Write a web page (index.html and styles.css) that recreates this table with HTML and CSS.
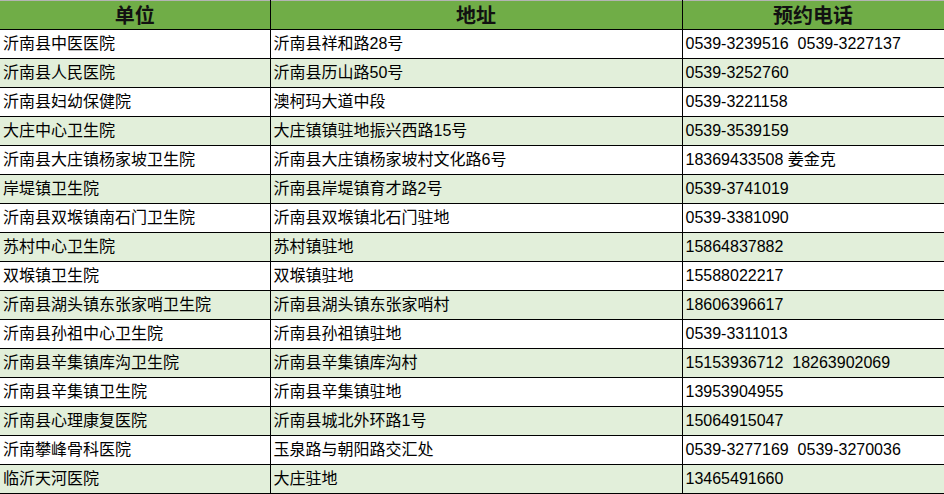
FILE: index.html
```html
<!DOCTYPE html>
<html lang="zh-CN">
<head>
<meta charset="utf-8">
<title>预约电话</title>
<link rel="stylesheet" href="styles.css">
</head>
<body>
<table class="grid">
  <colgroup>
    <col class="c1"><col class="c2"><col class="c3">
  </colgroup>
  <thead>
    <tr><th>单位</th><th>地址</th><th>预约电话</th></tr>
  </thead>
  <tbody>
    <tr><td>沂南县中医医院</td><td>沂南县祥和路28号</td><td>0539-3239516&nbsp;&nbsp;0539-3227137</td></tr>
    <tr><td>沂南县人民医院</td><td>沂南县历山路50号</td><td>0539-3252760</td></tr>
    <tr><td>沂南县妇幼保健院</td><td>澳柯玛大道中段</td><td>0539-3221158</td></tr>
    <tr><td>大庄中心卫生院</td><td>大庄镇镇驻地振兴西路15号</td><td>0539-3539159</td></tr>
    <tr><td>沂南县大庄镇杨家坡卫生院</td><td>沂南县大庄镇杨家坡村文化路6号</td><td>18369433508 姜金克</td></tr>
    <tr><td>岸堤镇卫生院</td><td>沂南县岸堤镇育才路2号</td><td>0539-3741019</td></tr>
    <tr><td>沂南县双堠镇南石门卫生院</td><td>沂南县双堠镇北石门驻地</td><td>0539-3381090</td></tr>
    <tr><td>苏村中心卫生院</td><td>苏村镇驻地</td><td>15864837882</td></tr>
    <tr><td>双堠镇卫生院</td><td>双堠镇驻地</td><td>15588022217</td></tr>
    <tr><td>沂南县湖头镇东张家哨卫生院</td><td>沂南县湖头镇东张家哨村</td><td>18606396617</td></tr>
    <tr><td>沂南县孙祖中心卫生院</td><td>沂南县孙祖镇驻地</td><td>0539-3311013</td></tr>
    <tr><td>沂南县辛集镇库沟卫生院</td><td>沂南县辛集镇库沟村</td><td>15153936712&nbsp;&nbsp;18263902069</td></tr>
    <tr><td>沂南县辛集镇卫生院</td><td>沂南县辛集镇驻地</td><td>13953904955</td></tr>
    <tr><td>沂南县心理康复医院</td><td>沂南县城北外环路1号</td><td>15064915047</td></tr>
    <tr><td>沂南攀峰骨科医院</td><td>玉泉路与朝阳路交汇处</td><td>0539-3277169&nbsp;&nbsp;0539-3270036</td></tr>
    <tr><td>临沂天河医院</td><td>大庄驻地</td><td>13465491660</td></tr>
  </tbody>
</table>
</body>
</html>
```

FILE: styles.css
```css
html, body {
  margin: 0;
  padding: 0;
  background: #ffffff;
}

body {
  width: 944px;
  height: 494px;
  overflow: hidden;
  font-family: "Liberation Sans", "Noto Sans CJK SC", sans-serif;
  color: #000000;
}

.grid {
  border-collapse: collapse;
  table-layout: fixed;
  width: 944px;
}

.c1 { width: 270px; }
.c2 { width: 412px; }
.c3 { width: 262px; }

.grid th {
  height: 28px;
  padding: 0;
  background: #70ad47;
  border-top: 1px solid #b4b4b4;
  border-bottom: 1px solid #000000;
  border-left: 1px solid #000000;
  border-right: 1px solid #000000;
  font-family: "Noto Sans CJK SC", sans-serif;
  font-size: 20px;
  font-weight: bold;
  line-height: 28px;
  text-align: center;
  color: #111111;
}

.grid th:first-child,
.grid td:first-child {
  border-left: none;
}

.grid td {
  height: 28px;
  padding: 0 0 0 3px;
  border: 1px solid #000000;
  font-size: 16px;
  line-height: 28px;
  white-space: nowrap;
  overflow: hidden;
  vertical-align: middle;
}

.grid tbody tr:nth-child(even) td {
  background: #e2efda;
}
```
